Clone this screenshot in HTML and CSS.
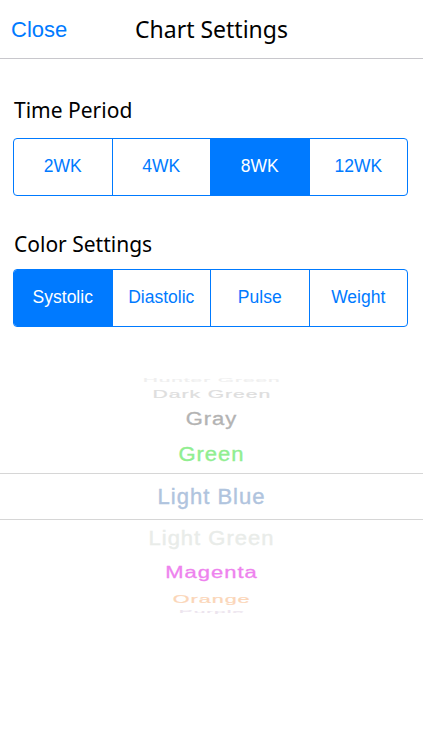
FILE: index.html
```html
<!DOCTYPE html>
<html lang="en">
<head>
    <meta charset="UTF-8">
    <title>Chart Settings</title>
    <link rel="stylesheet" href="styles.css">
</head>
<body>
    <div class="navbar">
        <a class="nav-close">Close</a>
        <div class="nav-title">Chart Settings</div>
        <div></div>
    </div>

    <div class="section section-time">
        <h2>Time Period</h2>
        <div class="segmented">
            <div class="segment">2WK</div>
            <div class="segment">4WK</div>
            <div class="segment selected">8WK</div>
            <div class="segment">12WK</div>
        </div>
    </div>

    <div class="section section-color">
        <h2>Color Settings</h2>
        <div class="segmented">
            <div class="segment selected">Systolic</div>
            <div class="segment">Diastolic</div>
            <div class="segment">Pulse</div>
            <div class="segment">Weight</div>
        </div>
    </div>

    <div class="picker">
        <div class="row r-far"><span class="c-hunter">Hunter Green</span></div>
        <div class="row r-back3"><span class="c-dark">Dark Green</span></div>
        <div class="row r-back2"><span class="c-gray">Gray</span></div>
        <div class="row r-back1"><span class="c-green">Green</span></div>
        <div class="row r-current"><span class="c-lightblue">Light Blue</span></div>
        <div class="row r-front1"><span class="c-lightgreen">Light Green</span></div>
        <div class="row r-front2"><span class="c-magenta">Magenta</span></div>
        <div class="row r-front3"><span class="c-orange">Orange</span></div>
        <div class="row r-end"><span class="c-purple">Purple</span></div>
    </div>
</body>
</html>
```

FILE: styles.css
```css
body {
    margin: 0;
    background: #ffffff;
    font-family: "Liberation Sans", Arial, sans-serif;
    color: #000;
}
.navbar {
    display: grid;
    grid-template-columns: 1fr auto 1fr;
    height: 58px;
    line-height: 59px;
    border-bottom: 1px solid #c8c7cc;
}
.nav-close {
    padding-left: 11px;
    font-size: 22px;
    color: #007aff;
}
.nav-title {
    font-family: "Noto Sans", sans-serif;
    font-size: 23px;
    color: #000;
}

.section {
    padding: 0 15px 0 13px;
}
.section h2 {
    margin: 0 0 15px 1px;
    font-family: "Noto Sans", sans-serif;
    font-weight: normal;
    font-size: 21px;
    line-height: 26px;
}
.section-time {
    margin-top: 38px;
}
.section-color {
    margin-top: 35px;
}
.section-color h2 {
    margin-bottom: 12px;
}

.segmented {
    display: flex;
    height: 56px;
    border: 1px solid #007aff;
    border-radius: 4px;
    overflow: hidden;
}
.segment {
    flex: 1;
    display: flex;
    align-items: center;
    justify-content: center;
    font-size: 17.5px;
    color: #007aff;
    border-left: 1px solid #007aff;
    padding-bottom: 2px;
}
.segment:first-child {
    border-left: none;
}
.segment.selected {
    background: #007aff;
    color: #ffffff;
}

.picker {
    margin-top: 48px;
}
.row {
    display: flex;
    align-items: center;
    justify-content: center;
    font-size: 22px;
    letter-spacing: 1px;
    white-space: nowrap;
    overflow: hidden;
    -webkit-text-stroke: 0.4px currentColor;
}
.row span {
    display: inline-block;
}
.r-far { height: 10px; }
.r-far span { transform: scale(0.95, 0.25); }
.r-back3 { height: 17px; }
.r-back3 span { transform: scale(0.96, 0.5); }
.r-back2 { height: 34px; }
.r-back2 span { transform: scale(1, 0.8); }
.r-back1 { height: 37px; }
.r-back1 span { transform: scaleY(0.92); }
.r-current {
    height: 45px;
    border-top: 1px solid #d6d6d6;
    border-bottom: 1px solid #d6d6d6;
}
.r-front1 { height: 37px; }
.r-front1 span { transform: scaleY(0.9); }
.r-front2 { height: 32px; }
.r-front2 span { transform: scaleY(0.75); }
.r-front3 { height: 19px; }
.r-front3 span { transform: scale(0.98, 0.5); }
.r-end { height: 7px; }
.r-end span { transform: scale(0.95, 0.2); }

.c-hunter { color: #efefef; }
.c-dark { color: #dedede; }
.c-gray { color: #b3b3b3; }
.c-green { color: #90ee90; }
.c-lightblue { color: #b0c4de; }
.c-lightgreen { color: #e9ece9; }
.c-magenta { color: #ee82ee; }
.c-orange { color: #fbd6b8; }
.c-purple { color: #ece4ee; }
```
